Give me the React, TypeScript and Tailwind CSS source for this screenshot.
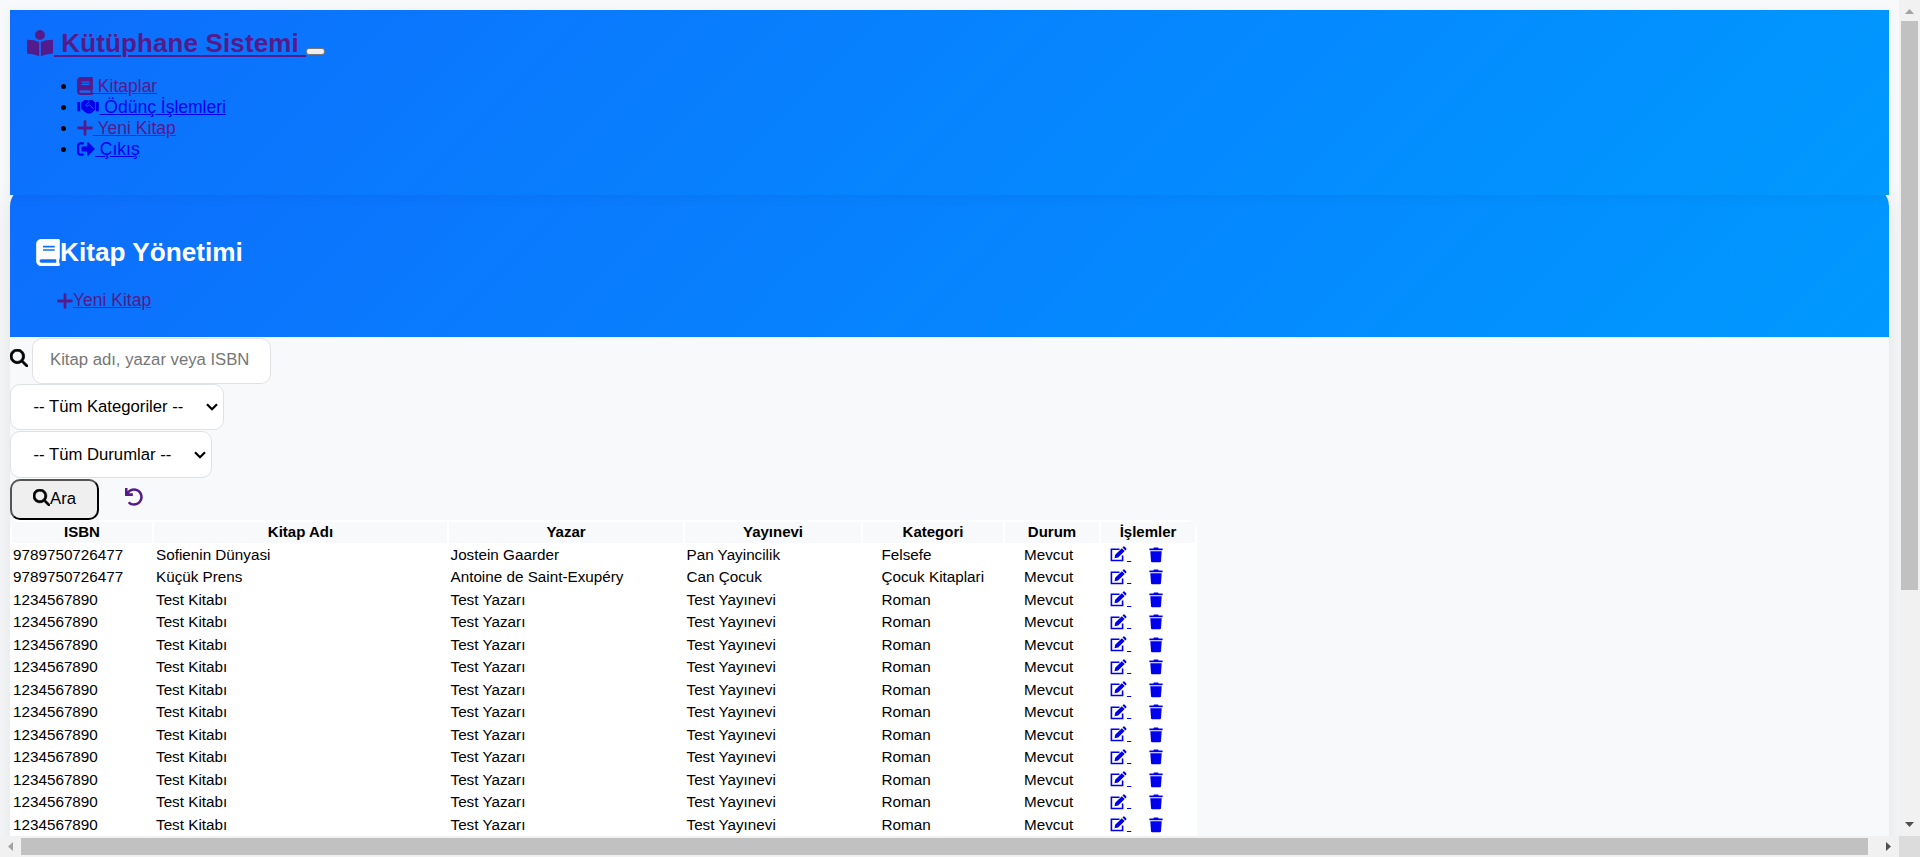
import React from "react";
import { FaBook, FaBookReader, FaSignOutAlt, FaUndo } from "react-icons/fa";
import { FaMagnifyingGlass } from "react-icons/fa6";

const books = [
  ["9789750726477", "Sofienin Dünyasi", "Jostein Gaarder", "Pan Yayincilik", "Felsefe"],
  ["9789750726477", "Küçük Prens", "Antoine de Saint-Exupéry", "Can Çocuk", "Çocuk Kitaplari"],
  ...Array.from({ length: 11 }, () => ["1234567890", "Test Kitabı", "Test Yazarı", "Test Yayınevi", "Roman"]),
];

const rowGrid = "grid grid-cols-[140px_293px_234px_176px_140px_94px_94px] gap-x-[2px] px-[2px]";

function NavItem({ icon, color, width, children }: { icon: React.ReactNode; color: string; width: string; children: string }) {
  return (
    <li className={`flex h-[21px] items-center ${color}`}>
      <span className="mr-[11px] h-[5px] w-[5px] rounded-full bg-black" />
      <span className={`mb-[2px] flex shrink-0 ${width}`}>{icon}</span>
      <span className="whitespace-pre underline">{children}</span>
    </li>
  );
}

function PlusIcon() {
  return (
    <svg viewBox="0 0 16 18" className="h-[18px] w-[16px]" fill="none" stroke="currentColor" strokeWidth="2.8" strokeLinecap="round">
      <path d="M8 2.600v12.800M1.600 9h12.800" />
    </svg>
  );
}

function HandshakeIcon() {
  return (
    <svg viewBox="0 0 22 18" className="h-[18px] w-[22px]" fill="currentColor">
      <path d="M.3 4h2.900v9.200H.3zM18.900 4h2.900v9.200h-2.900z" />
      <path d="M4.300 4.500 7.500 2h3.200l1 .7 1-.7h2.600l2.900 2.500v7.300l-2.600 2.400-2.200 1.300h-3.100l-2.700-1.800-3.300-2.700z" />
      <path d="M12 3.900 8.900 6.600c-.7.800.3 2 1.500 1.500l2-1.300 4.400 4.100" fill="none" stroke="#0d6efd" strokeWidth=".9" />
    </svg>
  );
}

function EditIcon() {
  return (
    <svg viewBox="0 0 17 17" className="h-[17px] w-[17px]" fill="none" stroke="currentColor">
      <path d="M9.500 3.300H1.400v11.200h11.200V9.500" strokeWidth="1.600" />
      <path d="M4.500 12.300 5.200 8.700 11.800 2.200 14.700 5.100 8.100 11.600zM12.500 1.500 13.400.6Q14 .1 14.700.7L16.200 2.200Q16.800 2.900 16.300 3.500L15.400 4.400z" fill="currentColor" stroke="none" />
    </svg>
  );
}

function TrashIcon() {
  return (
    <svg viewBox="0 0 14 16" className="h-[16px] w-[14px]" fill="currentColor">
      <path d="M.4 1.500h3.900L5 .5h4l.7 1h3.900v1.700H.4zM1.300 4.300h11.400l-.7 9.900q-.1 1.100-1.200 1.100H3.200q-1.100 0-1.200-1.100z" />
    </svg>
  );
}

function Chevron() {
  return (
    <svg viewBox="0 0 12 8" className="h-[8px] w-[12px]" fill="none" stroke="#000" strokeWidth="2.2">
      <path d="M1 1.2 6 6.2 11 1.2" />
    </svg>
  );
}

export default function App() {
  return (
    <div className="grid h-[857px] w-[1920px] grid-cols-[1899px_21px] grid-rows-[836px_21px] overflow-hidden bg-[#f8f9fb] font-['Liberation_Sans',Arial,sans-serif] text-black">
      <div className="overflow-hidden px-[10px] pt-[10px]">
        <nav className="relative z-10 h-[185px] w-[1879px] bg-[linear-gradient(135deg,#0d6efd,#0099ff)] pt-[17px] pl-[17px] shadow-[0_2px_12px_rgba(0,0,0,0.05)]">
          <div className="flex h-[32px] items-center text-[26px] font-bold tracking-[0.12px] text-[#551a8b]">
            <FaBookReader className="mr-px h-[26px] w-[26px]" />
            <span className="whitespace-pre underline decoration-2 underline-offset-[3px]"> Kütüphane Sistemi </span>
            <span className="mt-[17px] h-[7px] w-[19px] rounded-[3px] border border-[#767676] bg-[#efefef]" />
          </div>
          <ul className="mt-[17px] pl-[34px] text-[17.5px]">
            <NavItem color="text-[#551a8b]" width="w-[16px]" icon={<FaBook className="h-[18px] w-[16px]" />}> Kitaplar</NavItem>
            <NavItem color="text-[#0000ee]" width="w-[22.5px]" icon={<HandshakeIcon />}> Ödünç İşlemleri</NavItem>
            <NavItem color="text-[#551a8b]" width="w-[16px]" icon={<PlusIcon />}> Yeni Kitap</NavItem>
            <NavItem color="text-[#0000ee]" width="w-[18px]" icon={<FaSignOutAlt className="h-[18px] w-[18px]" />}> Çıkış</NavItem>
          </ul>
        </nav>
        <main className="-mt-[8px] h-[900px] w-[1879px] rounded-t-[19px] shadow-[0_5px_25px_rgba(0,0,0,0.1)]">
          <header className="h-[150px] rounded-t-[19px] bg-[linear-gradient(135deg,#0d6efd,#0099ff)] pt-[49px] pl-[26px]">
            <h2 className="flex h-[33px] items-center text-[26.200px] font-bold text-white">
              <FaBook className="mb-px h-[27px] w-[24px]" />
              Kitap Yönetimi
            </h2>
            <div className="mt-[21px] flex h-[21px] items-center pl-[21px] text-[17.5px] text-[#551a8b]">
              <PlusIcon />
              <span className="underline">Yeni Kitap</span>
            </div>
          </header>
          <div className="flex h-[47px] items-center">
            <FaMagnifyingGlass className="mb-[5px] h-[18px] w-[18px]" stroke="currentColor" strokeWidth="20" />
            <div className="ml-[4px] flex h-[46px] w-[239px] items-center rounded-[10px] border border-[#dee2e6] bg-white pb-[2px] pl-[17px] text-[16.7px] text-[#757575]">Kitap adı, yazar veya ISBN</div>
          </div>
          <div className="flex h-[46px] w-[214px] items-center justify-between rounded-[10px] border border-[#dee2e6] bg-white pr-[5px] pl-[22.500px] text-[16.7px]">
            -- Tüm Kategoriler --<Chevron />
          </div>
          <div className="mt-px flex h-[47px] w-[202px] items-center justify-between rounded-[10px] border border-[#dee2e6] bg-white pr-[5px] pl-[22.500px] text-[16.7px]">
            -- Tüm Durumlar --<Chevron />
          </div>
          <div className="mt-[1px] flex h-[41px] items-center">
            <div className="flex h-[41px] w-[89px] items-center justify-center rounded-[10px] border-2 border-t-[#555] border-r-black border-b-black border-l-[#555] bg-[#efefef] pb-[2px] text-[16.7px]">
              <FaMagnifyingGlass className="mb-[2px] h-[17px] w-[17px]" stroke="currentColor" strokeWidth="20" />Ara
            </div>
            <FaUndo className="mb-[5px] ml-[26px] h-[18px] w-[18px] text-[#551a8b]" />
          </div>
          <div className="h-[400px] w-[1187px] overflow-hidden rounded-t-[10px] bg-white pt-[2px] text-[15.25px]">
            <div className={`${rowGrid} h-[21px] text-center text-[15px] font-bold leading-[19px]`}>
              {["ISBN", "Kitap Adı", "Yazar", "Yayınevi", "Kategori", "Durum", "İşlemler"].map((h) => (
                <div key={h} className="bg-[#f8f9fb]">{h}</div>
              ))}
            </div>
            <div className="pt-[0.5px]">
              {books.map((b, i) => (
                <div key={i} className={`${rowGrid} h-[22.5px] items-center`}>
                  <span className="pl-[1px]">{b[0]}</span>
                  <span className="pl-[2px]">{b[1]}</span>
                  <span className="pl-[1.5px]">{b[2]}</span>
                  <span className="pl-[1.5px]">{b[3]}</span>
                  <span className="pl-[18.5px]">{b[4]}</span>
                  <span className="pl-[19px]">Mevcut</span>
                  <span className="flex items-center pl-[9px] text-[#0000ee]">
                    <EditIcon />
                    <span className="whitespace-pre underline"> </span>
                    <span className="ml-[18px] flex"><TrashIcon /></span>
                  </span>
                </div>
              ))}
            </div>
          </div>
        </main>
      </div>
      <div className="flex flex-col items-center bg-[#f1f1f1] pt-[9px] pb-[9px]">
        <svg className="h-[5px] w-[9px]" viewBox="0 0 9 5" fill="#a3a3a3"><path d="M4.5 0 9 5H0z" /></svg>
        <div className="mt-[7px] h-[569px] w-[17px] bg-[#c1c1c1]" />
        <svg className="mt-auto h-[5px] w-[9px]" viewBox="0 0 9 5" fill="#505050"><path d="M0 0h9L4.5 5z" /></svg>
      </div>
      <div className="flex items-center bg-[#f1f1f1] pr-[8px] pl-[8px]">
        <svg className="h-[9px] w-[5px]" viewBox="0 0 5 9" fill="#a3a3a3"><path d="M5 0v9L0 4.500z" /></svg>
        <div className="ml-[8px] h-[17px] w-[1847px] bg-[#c1c1c1]" />
        <svg className="ml-auto h-[9px] w-[5px]" viewBox="0 0 5 9" fill="#505050"><path d="M0 0v9L5 4.500z" /></svg>
      </div>
      <div className="bg-[#dcdcdc]" />
    </div>
  );
}
